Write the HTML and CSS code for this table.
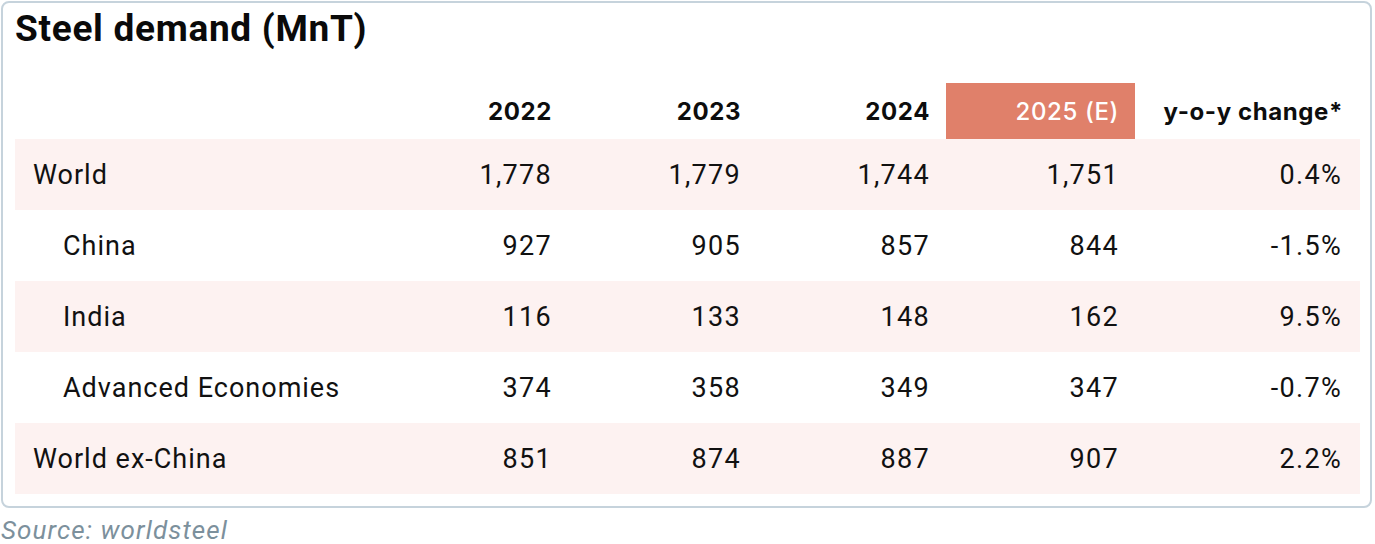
FILE: index.html
```html
<!DOCTYPE html>
<html>
<head>
<meta charset="utf-8">
<link rel="stylesheet" href="styles.css">
</head>
<body>
<div class="card">
  <h1 class="title">Steel demand (MnT)</h1>
  <table class="data">
    <colgroup>
      <col class="c-label"><col class="c-num"><col class="c-num"><col class="c-num"><col class="c-num"><col class="c-yoy">
    </colgroup>
    <thead>
      <tr>
        <th></th>
        <th>2022</th>
        <th>2023</th>
        <th>2024</th>
        <th class="est">2025 (E)</th>
        <th>y-o-y change*</th>
      </tr>
    </thead>
    <tbody>
      <tr class="band"><td class="lab">World</td><td>1,778</td><td>1,779</td><td>1,744</td><td>1,751</td><td>0.4%</td></tr>
      <tr><td class="lab sub">China</td><td>927</td><td>905</td><td>857</td><td>844</td><td>-1.5%</td></tr>
      <tr class="band"><td class="lab sub">India</td><td>116</td><td>133</td><td>148</td><td>162</td><td>9.5%</td></tr>
      <tr><td class="lab sub">Advanced Economies</td><td>374</td><td>358</td><td>349</td><td>347</td><td>-0.7%</td></tr>
      <tr class="band"><td class="lab">World ex-China</td><td>851</td><td>874</td><td>887</td><td>907</td><td>2.2%</td></tr>
    </tbody>
  </table>
</div>
<p class="source">Source: worldsteel</p>
</body>
</html>
```
FILE: styles.css
```css
html, body {
  margin: 0;
  padding: 0;
  background: #fff;
}
body {
  font-family: Roboto, "Liberation Sans", sans-serif;
  color: #111;
}
.card {
  margin: 1px 0 0 1px;
  width: 1371px;
  box-sizing: border-box;
  border: 2px solid #c6d3dc;
  border-radius: 8px;
  padding: 4px 11px 12px 12px;
}
.title {
  margin: 0;
  font-size: 37px;
  line-height: 44px;
  font-weight: 700;
  color: #0a0a0a;
  letter-spacing: 0.7px;
}
.data {
  margin-top: 32px;
  border-collapse: collapse;
  table-layout: fixed;
  width: 1345px;
}
.c-label { width: 364px; }
.c-num { width: 189px; }
.c-yoy { width: 225px; }
.data th {
  height: 56px;
  padding: 0 16px 0 0;
  font-family: Inter, Roboto, sans-serif;
  font-size: 24px;
  font-weight: 700;
  text-align: right;
  vertical-align: middle;
  letter-spacing: 0.6px;
  color: #0d0d0d;
}
.data th.est {
  background: #e0806a;
  color: #fff;
  font-weight: 500;
}
.data td {
  height: 71px;
  padding: 0 16px 0 0;
  font-size: 27px;
  text-align: right;
  vertical-align: middle;
  letter-spacing: 1.3px;
}
.data td:last-child {
  padding-right: 18px;
}
.data th:last-child {
  padding-right: 17px;
}
.data td.lab {
  text-align: left;
  padding-left: 18px;
  letter-spacing: 1px;
}
.data td.lab.sub {
  padding-left: 48px;
}
.band td {
  background: #fdf2f1;
}
.source {
  margin: 8px 0 0 1px;
  font-size: 26px;
  line-height: 28px;
  font-style: italic;
  color: #7c909c;
  letter-spacing: 1.1px;
}
```
